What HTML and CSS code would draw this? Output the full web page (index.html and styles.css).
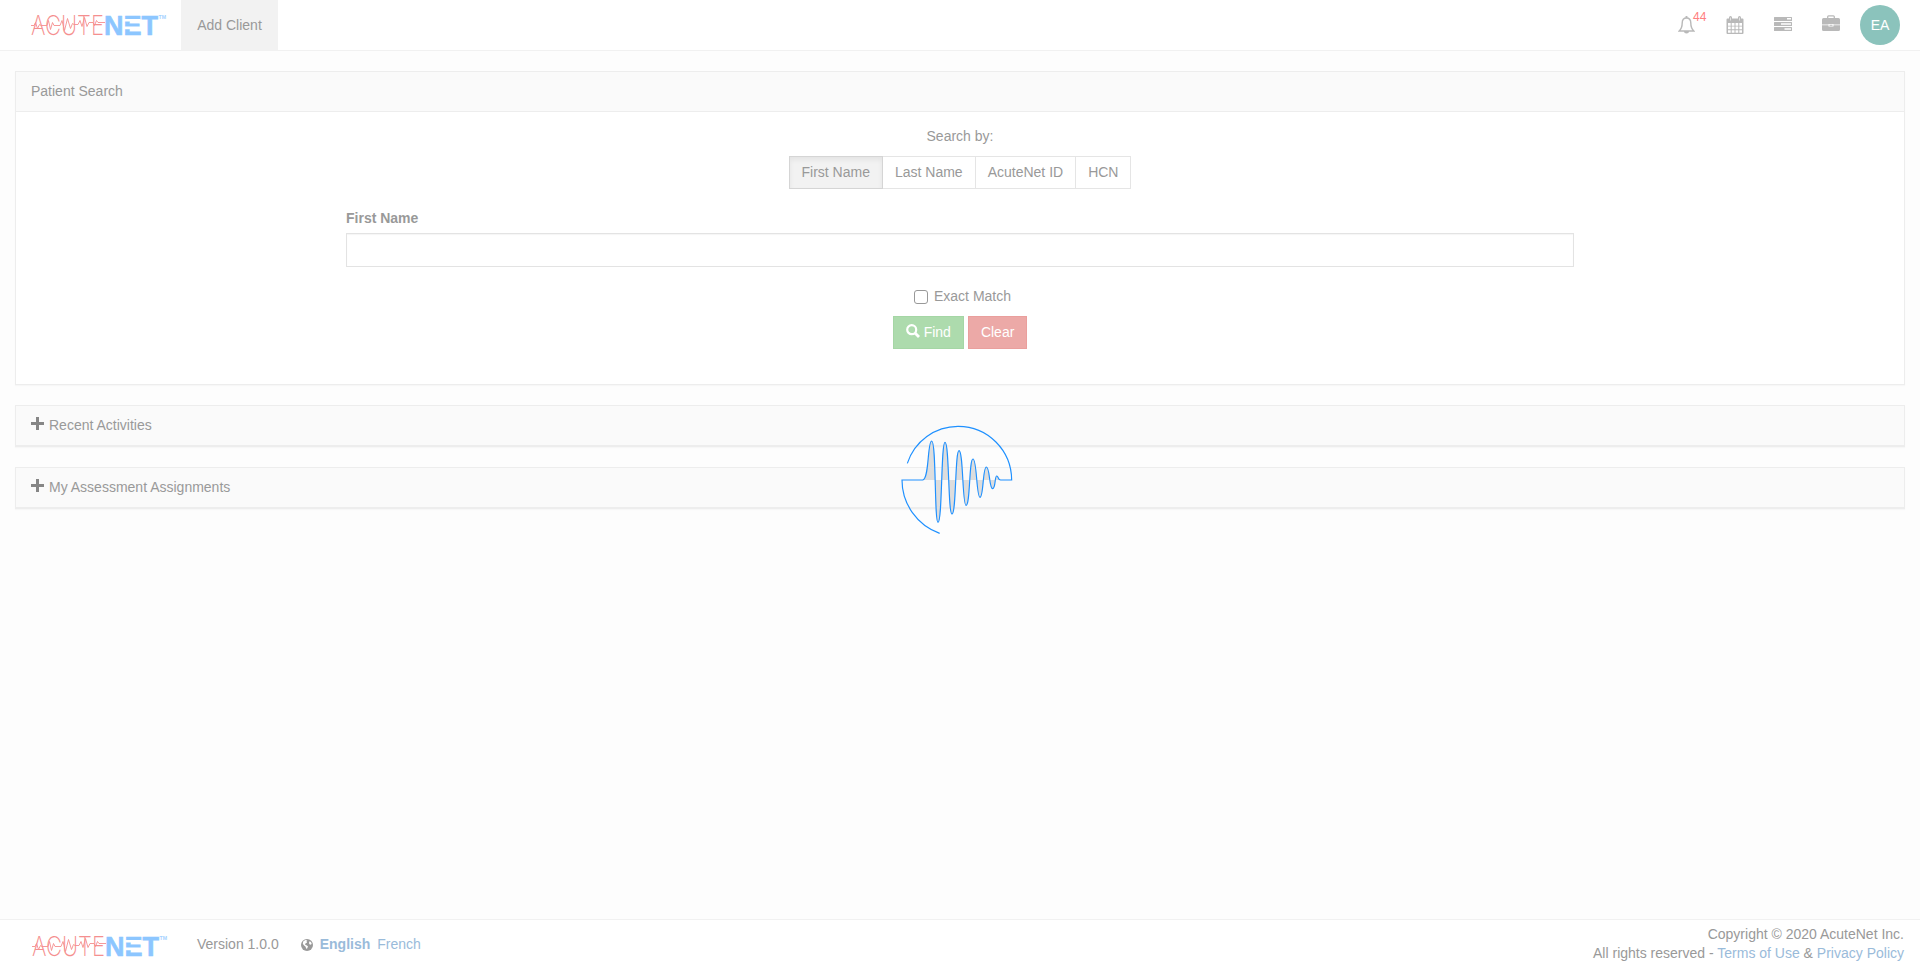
FILE: index.html
```html
<!DOCTYPE html>
<html lang="en">
<head>
<meta charset="utf-8">
<title>AcuteNet</title>
<link rel="stylesheet" href="styles.css">
</head>
<body>
<svg class="defs" width="0" height="0" aria-hidden="true">
  <symbol id="logo-marks" viewBox="0 0 136 40">
    <path class="logo-pulse" d="M0 20.500h3l1.500-3 2 6 2-4 1.500 1h6l1.500-5 2 9 2-7 1.500 3h6l2-5 2.500 10 3-12 3 10 2-5 1.500 1h4l2-4 2 6 2.500-9 2.500 9 2-4h4l1.500 3 2-5 1.500 2h7"/>
    <path d="M93 13.900h16.500v2.700H93zM93 21.500h16.500v2.700H93z" fill="#fff"/>
  </symbol>
</svg>

<header class="topbar">
  <a class="brand"><svg class="logo" width="136" height="40" viewBox="0 0 136 40">
    <text class="logo-acute" x="0" y="30" textLength="73" lengthAdjust="spacingAndGlyphs">ACUTE</text>
    <text class="logo-net" x="73" y="30" textLength="54" lengthAdjust="spacingAndGlyphs">NET</text>
    <text class="logo-tm" x="127.500" y="14" textLength="7.500" lengthAdjust="spacingAndGlyphs">TM</text>
    <use href="#logo-marks" width="136" height="40"/>
  </svg></a>
  <a class="nav-link">Add Client</a>
  <nav class="tools">
    <a class="tool bell">
      <svg width="17" height="19" viewBox="0 0 17 19"><path d="M8.500 2C5.500 2 4.200 4.300 4.200 7c0 4-1.200 6.200-3 8h14.600c-1.800-1.800-3-4-3-8 0-2.700-1.300-5-4.300-5z" fill="none" stroke="#b9b9b9" stroke-width="1.400"/><path d="M7.500 2V.8a1 1 0 0 1 2 0V2zM6 15h5a2.500 2.500 0 0 1-5 0z" fill="#b9b9b9"/></svg>
      <span class="count">44</span>
    </a>
    <a class="tool"><svg width="18" height="19" viewBox="0 0 18 19"><path fill="#b9b9b9" fill-rule="evenodd" d="M1.500 2.500H3v-1a1.500 1.500 0 0 1 3 0v1h6v-1a1.500 1.500 0 0 1 3 0v1h1.500q1 0 1 1V17q0 1-1 1h-15q-1 0-1-1V3.500q0-1 1-1zM2 7v2.700h2.700V7zm3.700 0v2.700h2.800V7zm3.800 0v2.700h2.800V7zm3.800 0v2.700H16V7zM2 10.600v2.700h2.700v-2.700zm3.700 0v2.700h2.800v-2.700zm3.800 0v2.700h2.800v-2.700zm3.800 0v2.700H16v-2.700zM2 14.200v2.600h2.700v-2.600zm3.700 0v2.600h2.800v-2.600zm3.800 0v2.600h2.800v-2.600zm3.800 0v2.600H16v-2.600z"/><path d="M4.500 1.500v3M13.500 1.500v3" stroke="#eee" stroke-width=".8"/></svg></a>
    <a class="tool"><svg width="18" height="15" viewBox="0 0 18 15"><path fill="#b9b9b9" fill-rule="evenodd" d="M.5 0h17q.5 0 .5.500v3q0 .5-.5.500H.5q-.5 0-.5-.5v-3Q0 0 .5 0zM13 1v1.500h4V1zM.5 5h17q.5 0 .5.500v3q0 .5-.5.500H.5q-.5 0-.5-.5v-3Q0 5 .5 5zM7 6.200v1.500h10V6.200zM.5 10h17q.5 0 .5.500v3q0 .5-.5.500H.5q-.5 0-.5-.5v-3q0-.5.500-.5zM10.500 11.300v1.500H17v-1.500z"/></svg></a>
    <a class="tool case"><svg width="18" height="17" viewBox="0 0 18 17"><path d="M5.700 4V1.700q0-.9.900-.9h4.800q.9 0 .9.900V4" fill="none" stroke="#b9b9b9" stroke-width="1.300"/><path fill="#b9b9b9" d="M1.500 3h15q1.500 0 1.500 1.500v5h-6.500V9h-5v.5H0v-5Q0 3 1.500 3zM0 10.200h6.500v1.300h5v-1.300H18v4.300q0 1.500-1.500 1.500h-15Q0 16 0 14.500zM7.500 9.700h3v1h-3z"/></svg></a>
    <span class="avatar">EA</span>
  </nav>
</header>

<main class="content">
  <section class="panel search">
    <h2 class="panel-heading">Patient Search</h2>
    <div class="panel-body">
      <div class="search-label">Search by:</div>
      <div class="btn-group">
        <button class="btn active">First Name</button><button class="btn">Last Name</button><button class="btn">AcuteNet ID</button><button class="btn">HCN</button>
      </div>
      <div class="field">
        <label for="first">First Name</label>
        <input id="first" type="text">
      </div>
      <label class="exact"><span class="box"></span>Exact Match</label>
      <div class="actions">
        <button class="btn find"><svg width="14" height="14" viewBox="0 0 14 14"><circle cx="5.700" cy="5.700" r="4.500" fill="none" stroke="#fff" stroke-width="2.200"/><path d="M9 9l4 4" stroke="#fff" stroke-width="2.800"/></svg>Find</button>
        <button class="btn clear">Clear</button>
      </div>
    </div>
  </section>
  <section class="panel"><h2 class="panel-heading"><span class="plus"></span>Recent Activities</h2></section>
  <section class="panel"><h2 class="panel-heading"><span class="plus"></span>My Assessment Assignments</h2></section>
</main>

<footer class="footer">
  <svg class="logo" width="136" height="40" viewBox="0 0 136 40">
    <text class="logo-acute" x="0" y="30" textLength="73" lengthAdjust="spacingAndGlyphs">ACUTE</text>
    <text class="logo-net" x="73" y="30" textLength="54" lengthAdjust="spacingAndGlyphs">NET</text>
    <text class="logo-tm" x="127.500" y="14" textLength="7.500" lengthAdjust="spacingAndGlyphs">TM</text>
    <use href="#logo-marks" width="136" height="40"/>
  </svg>
  <span class="version">Version 1.0.0</span>
  <svg class="globe" width="12" height="12" viewBox="0 0 12 12"><circle cx="6" cy="6" r="6" fill="#999"/><path fill="#fff" d="M2.200 2.400L4.300 1l2 .4-.8 1.300.6.900-1.700 1-.3 1.200 1.800.6 1.100 1.100-1 2.300-.9-.2-.5-1.900-1.700-1.400-1.100-1.600zM8.500 2.200l1.500.8.700 1.700-.8 1.100-1.500-.5-.4-1.400z"/></svg>
  <a class="lang current">English</a>
  <a class="lang">French</a>
  <div class="legal">Copyright © 2020 AcuteNet Inc.<br>All rights reserved - <a>Terms of Use</a> &amp; <a>Privacy Policy</a></div>
</footer>

<svg class="loader" width="150" height="140" viewBox="0 0 450 420">
  <path class="wave-fill" d="M128 210C148 208 142 93 155 93C169 93 163 337 174 337C187 337 183 97 195 97C208 97 204 312 216 312C229 312 225 122 237 122C250 122 247 286 258 286C271 286 267 147 279 147C291 147 289 262 300 262C311 262 308 171 319 171C330 171 327 236 338 236C347 236 344 198 350 198C356 198 353 210 362 210Z"/>
  <path class="wave-line" d="M82 160A160 161 0 0 1 235 49A160 162 0 0 1 395 210H362C353 210 356 198 350 198C344 198 347 236 338 236C327 236 330 171 319 171C308 171 311 262 300 262C289 262 291 147 279 147C267 147 271 286 258 286C247 286 250 122 237 122C225 122 229 312 216 312C204 312 208 97 195 97C183 97 187 337 174 337C163 337 169 93 155 93C142 93 148 208 128 210H66A170 170 0 0 0 179 370"/>
</svg>
</body>
</html>
```
FILE: styles.css
```css
* { box-sizing: border-box; }
body {
  margin: 0;
  height: 969px;
  overflow: hidden;
  display: flex;
  flex-direction: column;
  background: #fdfdfd;
  color: #999;
  font: 14px/20px "Liberation Sans", Arial, sans-serif;
}
.defs { position: absolute; }
svg { display: block; flex: none; }

.topbar {
  height: 51px;
  display: flex;
  background: #fff;
  border-bottom: 1px solid #f1f1f1;
}
.brand { padding: 5px 14px 0 31px; }
.nav-link { width: 97px; padding-top: 15px; text-align: center; background: #f2f2f2; }
.tools { margin-left: auto; display: flex; padding-right: 20px; }
.tool { width: 48px; padding-top: 16px; }
.tool:nth-child(3) { padding-top: 17px; }
.tool.case { width: 38px; padding-top: 15px; }
.bell { position: relative; }
.count {
  position: absolute;
  left: 15px;
  top: 7px;
  color: #ff8080;
  font: 12px/20px "Liberation Sans", Arial, sans-serif;
}
.avatar {
  width: 40px;
  height: 40px;
  margin-top: 5px;
  border-radius: 50%;
  background: #8bc3bc;
  color: #fff;
  line-height: 40px;
  text-align: center;
}

.logo { overflow: visible; }
.logo-acute { font: 200 27px Inter, sans-serif; fill: #f58f8f; }
.logo-pulse { fill: none; stroke: #f58f8f; stroke-width: .9; }
.logo-net { font: bold 28px "Liberation Sans", Arial, sans-serif; fill: #8cc6ff; stroke: #8cc6ff; stroke-width: .6; }
.logo-tm { font: bold 5px "Liberation Sans", Arial, sans-serif; fill: #a5d2ff; }

.content { flex: 1; padding: 20px 15px 0; }
.panel {
  margin-bottom: 20px;
  border: 1px solid #ededed;
  background: #fff;
  box-shadow: 0 1px 1px rgba(0, 0, 0, .025);
}
.panel-heading {
  margin: 0;
  height: 40px;
  padding: 9px 15px;
  display: flex;
  background: #fafafa;
  border-bottom: 1px solid #ededed;
  font: inherit;
}
.search { height: 314px; }
.panel-body { display: flex; flex-direction: column; align-items: center; padding-top: 14px; }
.plus {
  width: 13px;
  height: 13px;
  margin: 2px 5px 0 0;
  background: linear-gradient(#868686, #868686) center / 13px 3px no-repeat,
              linear-gradient(#868686, #868686) center / 3px 13px no-repeat;
}

.btn {
  height: 33px;
  padding: 0 12px 1px;
  border: 1px solid #e5e5e5;
  background: #fff;
  color: #999;
  font: inherit;
}
.btn-group { display: flex; margin-top: 10px; }
.btn + .btn { margin-left: -1px; }
.btn.active {
  z-index: 1;
  background: #f2f2f2;
  border-color: #d5d5d5;
  box-shadow: inset 0 3px 5px rgba(0, 0, 0, .06);
}
.field { width: 1228px; margin-top: 19px; }
.field label { display: block; font-weight: bold; }
.field input {
  display: block;
  width: 100%;
  height: 34px;
  margin-top: 5px;
  border: 1px solid #e3e3e3;
  background: #fff;
  box-shadow: inset 0 1px 1px rgba(0, 0, 0, .04);
}
.exact { display: flex; margin: 19px 0 0 5px; }
.box { width: 14px; height: 14px; margin: 4px 6px 0 0; border: 1px solid #999; border-radius: 3px; }
.actions { display: flex; gap: 4px; margin-top: 10px; }
.actions .btn { margin: 0; color: #fff; }
.find { display: flex; align-items: center; gap: 4px; background: #addbad; border-color: #a5d6a5; }
.find svg { margin-top: -3px; }
.clear { background: #eca9a7; border-color: #ea9f9d; }

.footer {
  height: 50px;
  display: flex;
  align-items: flex-start;
  padding: 14px 16px 0 32px;
  background: #fff;
  border-top: 1px solid #f1f1f1;
}
.footer .logo { margin-top: -8px; }
.version { margin-left: 29px; }
.globe { margin: 5px 7px 0 22px; }
.lang { margin-right: 7px; }
.lang.current { font-weight: bold; }
.lang, .legal a { color: #9abbda; }
.legal { margin: -9px 0 0 auto; line-height: 19px; text-align: right; }

.loader { position: absolute; left: 880px; top: 410px; }
.wave-fill { fill: #ddd; }
.wave-line { fill: none; stroke: #1e90ff; stroke-width: 3.500; }
```
